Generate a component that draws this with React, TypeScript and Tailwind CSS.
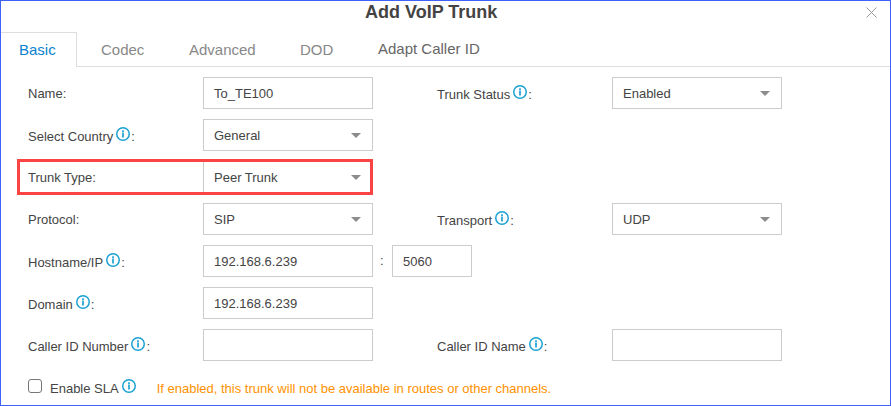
import React from "react";

function InfoIcon() {
  return (
    <svg className="ml-[3px] mt-[8px] h-[14px] w-[14px] shrink-0" viewBox="0 0 14 14" fill="none">
      <circle cx="7" cy="7" r="6.25" stroke="#1ba1d2" strokeWidth="1.5" />
      <path d="M7 3.3V4.9M7 5.5V10.5" stroke="#1ba1d2" strokeWidth="1.7" />
    </svg>
  );
}

function Label({ text, info = false, className = "" }: { text: string; info?: boolean; className?: string }) {
  return (
    <div className={`flex h-8 items-start whitespace-nowrap text-[13px] text-[#444] ${className}`}>
      <span className={info ? "leading-[36px]" : "leading-[34px]"}>
        {text}
        {info ? "" : ":"}
      </span>
      {info && (
        <>
          <InfoIcon />
          <span className="pl-px leading-[36px]">:</span>
        </>
      )}
    </div>
  );
}

function Field({ value = "", select = false, className = "w-[170px]" }: { value?: string; select?: boolean; className?: string }) {
  return (
    <div className={`flex h-8 items-center justify-between border border-[#ccc] bg-white pl-[10px] pr-[11px] text-[13px] text-[#444] ${className}`}>
      <span className="pt-0.5 leading-[28px]">{value}</span>
      {select && (
        <svg className="h-[5px] w-[10px]" viewBox="0 0 10 5">
          <path d="M0 0H10L5 5Z" fill="#8c8c8c" />
        </svg>
      )}
    </div>
  );
}

function Row({ children }: { children: React.ReactNode }) {
  return <div className="flex h-8">{children}</div>;
}

export default function App() {
  return (
    <div className="flex h-[406px] w-[891px] flex-col overflow-hidden border border-[#4060fa] bg-white font-['Liberation_Sans',Arial,sans-serif]">
      <header className="flex h-[31px] items-start">
        <h1 className="ml-[364px] w-[134px] whitespace-nowrap text-[18px] font-bold leading-[22px] text-[#444]">Add VoIP Trunk</h1>
        <svg className="ml-auto mr-[13px] mt-[6px] h-[11px] w-[11px]" viewBox="0 0 11 11">
          <path d="M0.5 0.5L10.5 10.5M10.5 0.5L0.5 10.5" stroke="#999" strokeWidth="1" />
        </svg>
      </header>

      <nav className="flex h-[35px] whitespace-nowrap text-[15px] leading-[34px] text-[#888]">
        <div className="w-[76px] border-r border-t border-[#ddd] pl-[18px] text-[#0a82d0]">Basic</div>
        <div className="flex flex-1 border-b border-[#ddd] pl-[24px] pt-px">
          <span className="w-[88px]">Codec</span>
          <span className="w-[111px]">Advanced</span>
          <span className="w-[78px]">DOD</span>
          <span className="leading-8 text-[#666]">Adapt Caller ID</span>
        </div>
      </nav>

      <main className="flex flex-col gap-[10px] pl-[27px] pt-[10px]">
        <Row>
          <Label text="Name" className="w-[175px]" />
          <Field value="To_TE100" />
          <Label text="Trunk Status" info className="ml-[64px] w-[175px]" />
          <Field value="Enabled" select />
        </Row>
        <Row>
          <Label text="Select Country" info className="w-[175px]" />
          <Field value="General" select />
        </Row>
        <div className="relative flex h-8">
          <Label text="Trunk Type" className="w-[175px]" />
          <Field value="Peer Trunk" select />
          <div className="absolute -left-[11px] -top-[2px] h-9 w-[356px] border-[3px] border-[#fa4343]" />
        </div>
        <Row>
          <Label text="Protocol" className="w-[175px]" />
          <Field value="SIP" select />
          <Label text="Transport" info className="ml-[64px] w-[175px]" />
          <Field value="UDP" select />
        </Row>
        <Row>
          <Label text="Hostname/IP" info className="w-[175px]" />
          <Field value="192.168.6.239" />
          <span className="w-[19px] pl-[7px] text-[13px] leading-8 text-[#444]">:</span>
          <Field value="5060" className="w-20" />
        </Row>
        <Row>
          <Label text="Domain" info className="w-[175px]" />
          <Field value="192.168.6.239" />
        </Row>
        <Row>
          <Label text="Caller ID Number" info className="w-[175px]" />
          <Field />
          <Label text="Caller ID Name" info className="ml-[64px] w-[175px]" />
          <Field />
        </Row>
        <div className="flex h-8 items-start whitespace-nowrap text-[13px] leading-[36px] text-[#444]">
          <span className="mt-[8px] h-[14px] w-[14px] rounded-[3px] border border-[#767676]" />
          <span className="ml-[8px]">Enable SLA</span>
          <InfoIcon />
          <span className="ml-[21px] text-[#ff9100]">If enabled, this trunk will not be available in routes or other channels.</span>
        </div>
      </main>
    </div>
  );
}
